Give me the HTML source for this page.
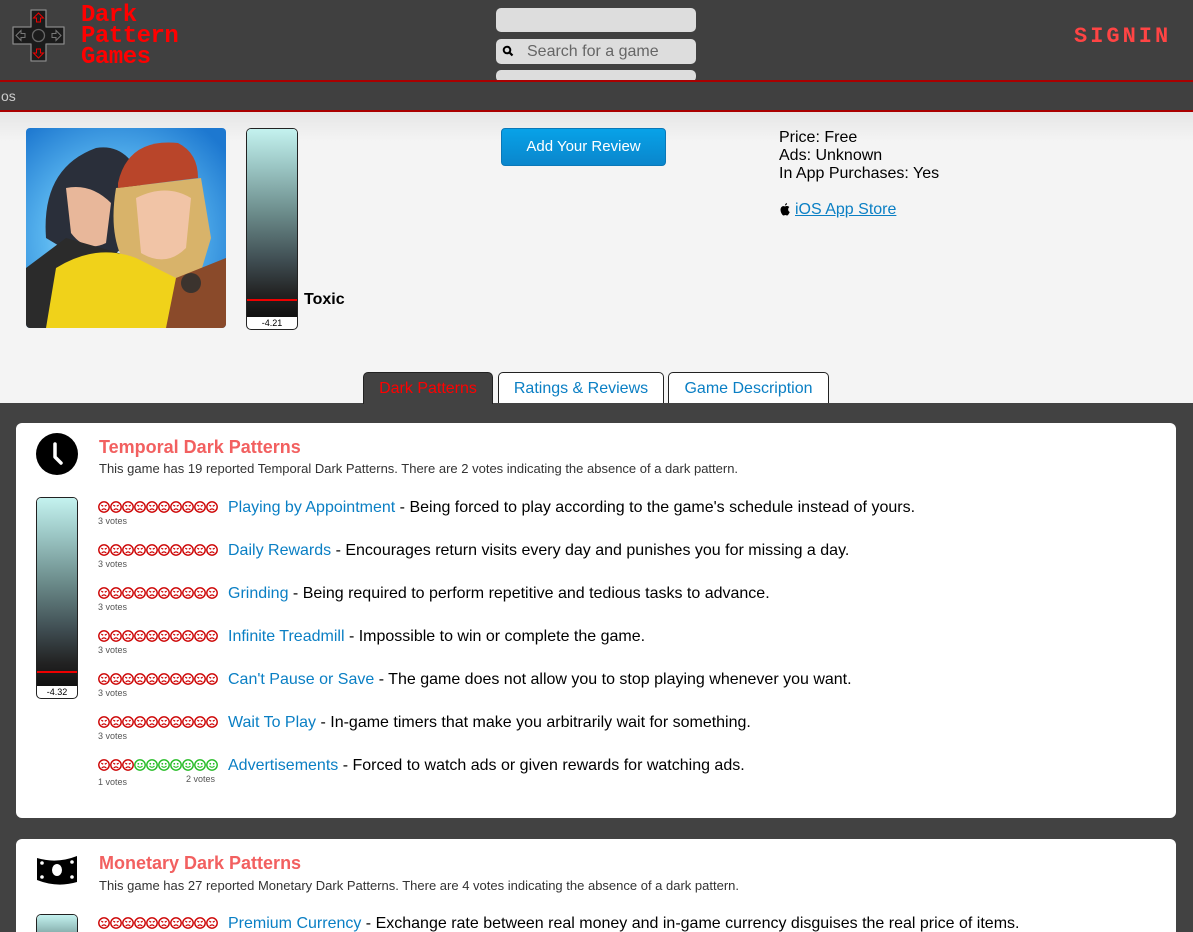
<!DOCTYPE html>
<html style="width:1193px;height:932px;overflow:hidden"><head><meta charset="utf-8"><style>
*{box-sizing:border-box;margin:0;padding:0}
body{width:1193px;height:932px;overflow:hidden;background:#424242;font-family:"Liberation Sans",Arial,sans-serif;position:relative}
.a{position:absolute}
.pix{font-family:"Liberation Mono",monospace;font-weight:bold;color:#f00}
.link{color:#0a7fc4}
.row{position:absolute;left:98px;font-size:16px;color:#000;white-space:nowrap}
.row .t{position:absolute;left:130px;top:0px}
.row .v{position:absolute;left:0;top:17px;font-size:9px;color:#555}
.card{position:absolute;left:16px;width:1160px;background:#fff;border-radius:6px}
.h{position:absolute;left:99px;font-size:18px;font-weight:bold;color:#f26060}
.sub{position:absolute;left:99px;font-size:13px;color:#333}
.bar{position:absolute;border:1px solid #222;border-radius:5px;overflow:hidden;background:#fff}
.bar .g{position:absolute;left:0;right:0;top:0;background:linear-gradient(#c4f2ef,#9bc6c4 20%,#6b8b8a 45%,#3f4d52 70%,#222 88%,#111)}
.bar .r{position:absolute;left:0;right:0;height:2px;background:#e00}
.bar .n{position:absolute;left:0;right:0;bottom:0;text-align:center;font-size:9px;line-height:11px}
</style></head><body>
<svg width="0" height="0" style="position:absolute"><defs>
<pattern id="sad" width="12" height="12" patternUnits="userSpaceOnUse"><circle cx="6" cy="6" r="5.2" fill="#fff" stroke="#c00" stroke-width="1.4"/><path d="M3.3 4.2l1.9 1M8.7 4.2l-1.9 1M3.7 9q2.3-2.2 4.6 0" stroke="#c00" stroke-width="1.2" fill="none"/></pattern>
<pattern id="hap" width="12" height="12" patternUnits="userSpaceOnUse"><circle cx="6" cy="6" r="5.2" fill="#fff" stroke="#2b2" stroke-width="1.4"/><circle cx="4.3" cy="4.8" r=".9" fill="#2b2"/><circle cx="7.7" cy="4.8" r=".9" fill="#2b2"/><path d="M3.5 7q2.5 2.6 5 0" stroke="#2b2" stroke-width="1.2" fill="none"/></pattern>
</defs></svg>

<div class="a" style="left:0;top:0;width:1193px;height:80px;background:#404040"></div>
<svg class="a" style="left:0;top:0" width="80" height="70">
<path d="M31 10h15v17h18v17h-18v17h-15v-17h-18v-17h18z" fill="#1b1b1b" stroke="#888" stroke-width="1.3" stroke-linejoin="round"/>
<circle cx="38.5" cy="35.5" r="6" fill="none" stroke="#666" stroke-width="1.3"/>
<path d="M38.5 13l5 5h-3v4h-4v-4h-3z" fill="none" stroke="#e00" stroke-width="1"/>
<path d="M38.5 58l5-5h-3v-4h-4v4h-3z" fill="none" stroke="#e00" stroke-width="1"/>
<path d="M16 35.5l5-5v3h4v4h-4v3z" fill="none" stroke="#777" stroke-width="1"/>
<path d="M61 35.5l-5-5v3h-4v4h4v3z" fill="none" stroke="#777" stroke-width="1"/>
</svg>
<div class="a pix" style="left:81px;top:5px;font-size:24px;line-height:21px;letter-spacing:-0.5px">Dark<br>Pattern<br>Games</div>
<div class="a" style="left:496px;top:-6px;width:200px;height:6px;background:#ddd;border-radius:4px"></div>
<div class="a" style="left:496px;top:8px;width:200px;height:24px;background:#ddd;border-radius:5px"></div>
<div class="a" style="left:496px;top:39px;width:200px;height:25px;background:#ddd;border-radius:5px"></div>
<svg class="a" style="left:502px;top:45px" width="12" height="12"><circle cx="5" cy="5" r="3.3" fill="none" stroke="#000" stroke-width="2"/><path d="M7.5 7.5l3 3" stroke="#000" stroke-width="2.2"/></svg>
<div class="a" style="left:527px;top:43px;font-size:16px;color:#666">Search for a game</div>
<div class="a" style="left:496px;top:70px;width:200px;height:12px;background:#ddd;border-radius:5px"></div>
<div class="a pix" style="left:1074px;top:24px;font-size:22px;color:#f44;letter-spacing:3px">SIGNIN</div>
<div class="a" style="left:0;top:80px;width:1193px;height:2px;background:#a00"></div>
<div class="a" style="left:0;top:82px;width:1193px;height:28px;background:#404040"></div>
<div class="a" style="left:1px;top:88px;font-size:14px;color:#ccc">os</div>
<div class="a" style="left:0;top:110px;width:1193px;height:2px;background:#a00"></div>

<div class="a" style="left:0;top:112px;width:1193px;height:291px;background:linear-gradient(#e6e6e6,#f4f4f4 30px)"></div>
<svg class="a" style="left:26px;top:128px;border-radius:4px" width="200" height="200">
<defs><radialGradient id="bg" cx=".45" cy=".55" r=".7"><stop offset="0" stop-color="#eaf6ff"/><stop offset=".5" stop-color="#5ab6ef"/><stop offset="1" stop-color="#1d78d0"/></radialGradient></defs>
<rect width="200" height="200" fill="url(#bg)"/>
<path d="M20 110q-5-70 50-90 30-5 45 30l-5 60-40 30z" fill="#2a2f3a"/>
<path d="M40 60q25-5 45 15l-5 40q-20 10-35-10z" fill="#e8b79a"/>
<path d="M0 140l40-30 70 20 10 70H0z" fill="#2b2b2b"/>
<path d="M90 60q-10 60 20 90l60 10 15-50-10-60z" fill="#d8b36a"/>
<path d="M110 70q30-15 55 0l-5 50q-20 20-45 5z" fill="#f1c4a6"/>
<path d="M92 55q10-45 60-40 20 10 20 35l-80 10z" fill="#b9452a"/>
<path d="M30 140q40-25 80-10l40 20 10 50H20z" fill="#f0d21a"/>
<path d="M150 150l50-20v70h-60z" fill="#8a4a2a"/>
<circle cx="165" cy="155" r="10" fill="#3b332e"/>
</svg>
<div class="bar" style="left:246px;top:128px;width:52px;height:202px"><div class="g" style="height:188px"></div><div class="r" style="top:170px"></div><div class="n">-4.21</div></div>
<div class="a" style="left:304px;top:291px;font-size:16px;font-weight:bold">Toxic</div>
<div class="a" style="left:501px;top:128px;width:165px;height:38px;border-radius:4px;background:linear-gradient(#08a2e8,#0a86cc);border:1px solid #0a78b8;color:#fff;font-size:15px;text-align:center;line-height:36px">Add Your Review</div>
<div class="a" style="left:779px;top:129px;font-size:16px;line-height:18px">Price: Free<br>Ads: Unknown<br>In App Purchases: Yes</div>
<svg class="a" style="left:779px;top:202px" width="12" height="14"><path d="M8 1q-2 .5-2 2.5 2-.3 2-2.5zM6 4.5c-1-.6-4-1-4.5 3 0 3 2 6 3 6s1.3-.5 1.8-.5 1 .5 1.8.5c1 0 2.3-2.5 2.6-3.5-2-1-2-4-.3-5C8.5 3.5 7 4 6 4.5z" fill="#000"/></svg>
<div class="a link" style="left:795px;top:201px;font-size:16px;text-decoration:underline">iOS App Store</div>

<div class="a" style="left:363px;top:372px;width:130px;height:32px;background:#424242;border:1px solid #222;border-bottom:0;border-radius:5px 5px 0 0;color:#f00;font-size:16px;text-align:center;line-height:31px">Dark Patterns</div>
<div class="a link" style="left:498px;top:372px;width:166px;height:31px;background:#fff;border:1px solid #222;border-bottom:0;border-radius:5px 5px 0 0;font-size:16px;text-align:center;line-height:31px">Ratings &amp; Reviews</div>
<div class="a link" style="left:668px;top:372px;width:161px;height:31px;background:#fff;border:1px solid #222;border-bottom:0;border-radius:5px 5px 0 0;font-size:16px;text-align:center;line-height:31px">Game Description</div>

<div class="card" style="top:423px;height:395px"></div>
<svg class="a" style="left:36px;top:433px" width="44" height="44"><circle cx="21" cy="21" r="21" fill="#000"/><path d="M19 11v13l6 6" stroke="#fff" stroke-width="3.5" fill="none" stroke-linecap="round" stroke-linejoin="round"/></svg>
<div class="h" style="top:437px">Temporal Dark Patterns</div>
<div class="sub" style="top:461px">This game has 19 reported Temporal Dark Patterns. There are 2 votes indicating the absence of a dark pattern.</div>
<div class="bar" style="left:36px;top:497px;width:42px;height:202px"><div class="g" style="height:188px"></div><div class="r" style="top:173px"></div><div class="n">-4.32</div></div>

<div class="row" style="top:499px"><svg width="120" height="12" style="position:absolute;top:2px"><rect width="120" height="12" fill="url(#sad)"/></svg><span class="t"><span class="link">Playing by Appointment</span> - Being forced to play according to the game's schedule instead of yours.</span><span class="v">3 votes</span></div>
<div class="row" style="top:542px"><svg width="120" height="12" style="position:absolute;top:2px"><rect width="120" height="12" fill="url(#sad)"/></svg><span class="t"><span class="link">Daily Rewards</span> - Encourages return visits every day and punishes you for missing a day.</span><span class="v">3 votes</span></div>
<div class="row" style="top:585px"><svg width="120" height="12" style="position:absolute;top:2px"><rect width="120" height="12" fill="url(#sad)"/></svg><span class="t"><span class="link">Grinding</span> - Being required to perform repetitive and tedious tasks to advance.</span><span class="v">3 votes</span></div>
<div class="row" style="top:628px"><svg width="120" height="12" style="position:absolute;top:2px"><rect width="120" height="12" fill="url(#sad)"/></svg><span class="t"><span class="link">Infinite Treadmill</span> - Impossible to win or complete the game.</span><span class="v">3 votes</span></div>
<div class="row" style="top:671px"><svg width="120" height="12" style="position:absolute;top:2px"><rect width="120" height="12" fill="url(#sad)"/></svg><span class="t"><span class="link">Can't Pause or Save</span> - The game does not allow you to stop playing whenever you want.</span><span class="v">3 votes</span></div>
<div class="row" style="top:714px"><svg width="120" height="12" style="position:absolute;top:2px"><rect width="120" height="12" fill="url(#sad)"/></svg><span class="t"><span class="link">Wait To Play</span> - In-game timers that make you arbitrarily wait for something.</span><span class="v">3 votes</span></div>
<div class="row" style="top:757px"><svg width="120" height="12" style="position:absolute;top:2px"><rect width="36" height="12" fill="url(#sad)"/><rect x="36" width="84" height="12" fill="url(#hap)"/></svg><span class="t"><span class="link">Advertisements</span> - Forced to watch ads or given rewards for watching ads.</span><span class="v" style="top:20px">1 votes</span><span class="v" style="left:88px;top:17px">2 votes</span></div>

<div class="card" style="top:839px;height:93px;border-radius:6px 6px 0 0"></div>
<svg class="a" style="left:35px;top:854px" width="44" height="32"><path d="M2 4q20 6 40-2v26q-20 6-40-2z" fill="#000"/><ellipse cx="22" cy="16" rx="5" ry="6" fill="#fff"/><circle cx="7" cy="9" r="1.8" fill="#fff"/><circle cx="37" cy="8" r="1.8" fill="#fff"/><circle cx="7" cy="23" r="1.8" fill="#fff"/><circle cx="37" cy="23" r="1.8" fill="#fff"/></svg>
<div class="h" style="top:853px">Monetary Dark Patterns</div>
<div class="sub" style="top:878px">This game has 27 reported Monetary Dark Patterns. There are 4 votes indicating the absence of a dark pattern.</div>
<div class="bar" style="left:36px;top:914px;width:42px;height:18px;border-bottom:0;border-radius:5px 5px 0 0"><div class="g" style="height:60px"></div></div>
<div class="row" style="top:915px"><svg width="120" height="12" style="position:absolute;top:2px"><rect width="120" height="12" fill="url(#sad)"/></svg><span class="t"><span class="link">Premium Currency</span> - Exchange rate between real money and in-game currency disguises the real price of items.</span></div>
</body></html>
